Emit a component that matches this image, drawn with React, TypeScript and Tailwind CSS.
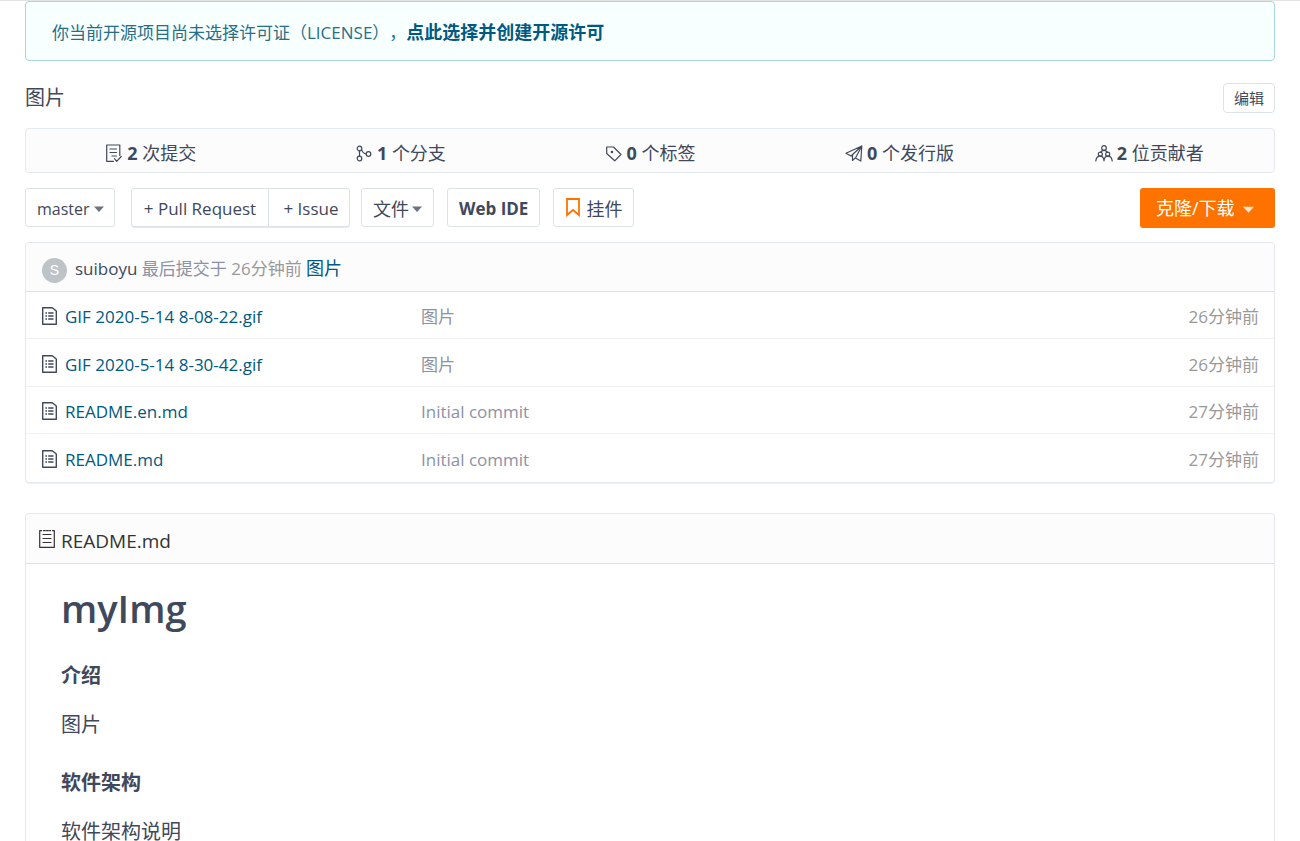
import React from 'react';

interface RepoFile {
  name: string;
  message: string;
  time: string;
}

interface Stat {
  icon: React.ReactNode;
  count: number;
  label: string;
}

interface IconProps {
  className?: string;
  children: React.ReactNode;
}

function Icon({ className = '', children }: IconProps) {
  return (
    <svg
      viewBox="0 0 18 18"
      className={`h-[18px] w-[18px] shrink-0 ${className}`}
      fill="none"
      stroke="currentColor"
      strokeWidth="1.2"
      strokeLinecap="round"
      strokeLinejoin="round"
      aria-hidden="true"
    >
      {children}
    </svg>
  );
}

function Caret({ className = 'h-[6px] w-[10px] text-[#6b7280]' }: { className?: string }) {
  return (
    <svg viewBox="0 0 10 6" className={`shrink-0 ${className}`} fill="currentColor" aria-hidden="true">
      <path d="M0 .5h10L5 6z" />
    </svg>
  );
}

function FileIcon() {
  return (
    <Icon className="mb-0.5">
      <path d="M1.7.7h9.600l4 3.300v13.300H1.700z" strokeWidth="1.400" />
      <path d="M7.200 6h5.300M7.200 9h5.300M7.200 12h5.300" strokeWidth="1.400" strokeLinecap="butt" />
      <path d="M4.400 6h1.600M4.400 9h1.600M4.400 12h1.600" strokeWidth="1.600" strokeLinecap="butt" />
    </Icon>
  );
}

const stats: Stat[] = [
  {
    icon: (
      <Icon>
        <path d="M8.500 17.300H1.700V1H14.800V11.500" />
        <path d="M5 5h6.500M5 8.500h6.500M7 12h4.500" />
        <path d="M9.500 14.700l2.200 2.600 4.500-4.800" />
      </Icon>
    ),
    count: 2,
    label: '次提交',
  },
  {
    icon: (
      <Icon>
        <circle cx="4.500" cy="4.500" r="2.300" />
        <circle cx="4.500" cy="14.500" r="2.300" />
        <circle cx="13.500" cy="10" r="2.300" />
        <path d="M4.500 6.800v5.400M6.500 5.600c1 2.800 2.500 4 4.700 4.300" />
      </Icon>
    ),
    count: 1,
    label: '个分支',
  },
  {
    icon: (
      <Icon>
        <path d="M1.700 3h6.800l7.500 7.500-6.300 6.300-8-7.300z" />
        <circle cx="7" cy="8" r="0.700" fill="currentColor" />
      </Icon>
    ),
    count: 0,
    label: '个标签',
  },
  {
    icon: (
      <Icon>
        <path d="M16.800 2L1 9.300l5 2.700zM16.800 2L15.800 17 10.500 14zM7.500 11v5.500l2.800-2.600" />
      </Icon>
    ),
    count: 0,
    label: '个发行版',
  },
  {
    icon: (
      <Icon>
        <circle cx="9" cy="4" r="2.300" />
        <path d="M5.500 8.300C6.500 6.900 7.600 6.400 9 6.400s2.500.5 3.500 1.900" />
        <circle cx="5.300" cy="10.200" r="2" />
        <circle cx="12.700" cy="10.200" r="2" />
        <path d="M.8 17c.3-3.200 2-4.800 4.500-4.800 2 0 3.400 1.600 3.700 4.600.3-3 1.700-4.600 3.700-4.600 2.500 0 4.200 1.600 4.500 4.800" />
      </Icon>
    ),
    count: 2,
    label: '位贡献者',
  },
];

const files: RepoFile[] = [
  { name: 'GIF 2020-5-14 8-08-22.gif', message: '图片', time: '26分钟前' },
  { name: 'GIF 2020-5-14 8-30-42.gif', message: '图片', time: '26分钟前' },
  { name: 'README.en.md', message: 'Initial commit', time: '27分钟前' },
  { name: 'README.md', message: 'Initial commit', time: '27分钟前' },
];

function LicenseNotice() {
  return (
    <div className="flex h-[60px] items-center rounded border border-[#a9d5de] bg-[#f8ffff] px-[26px] pt-0.5 text-[#276f86] [text-spacing-trim:space-all]">
      <p>
        你当前开源项目尚未选择许可证（LICENSE），
        <a href="#license" className="text-lg leading-6 font-bold text-[#005980]">
          点此选择并创建开源许可
        </a>
      </p>
    </div>
  );
}

function Toolbar() {
  const button = 'flex h-[39px] items-center rounded-[3px] border border-[#dce3e8] bg-white px-[11px] pt-0.5';

  return (
    <div className="mt-[15px] flex items-start justify-between">
      <div className="flex items-center">
        <div className="relative mr-4">
          <select
            aria-label="分支"
            className="h-[39px] w-[90px] appearance-none rounded-[3px] border border-[#dce3e8] bg-white pt-0.5 pl-[11px] text-base"
          >
            <option>master</option>
          </select>
          <Caret className="pointer-events-none absolute top-[18px] right-[11px] h-[6px] w-[10px] text-[#6b7280]" />
        </div>

        <div className="mr-[11px] flex h-[39px] rounded-[3px] border border-[#dce3e8] bg-white shadow-[0_1px_0_#e6ebef]">
          <button type="button" className="w-[137px] border-r border-[#dce3e8] pt-0.5">
            + Pull Request
          </button>
          <button type="button" className="w-20 pt-0.5 pl-1">
            + Issue
          </button>
        </div>

        <div className="flex gap-[13px]">
          <button type="button" className={`${button} gap-[3px] text-lg`}>
            文件
            <Caret />
          </button>
          <button type="button" className={`${button} font-bold`}>
            Web IDE
          </button>
          <button type="button" className={`${button} gap-[5px] text-lg`}>
            <svg viewBox="0 0 16 20" className="mb-1 h-5 w-4 text-[#fe7300]" fill="none" stroke="currentColor" strokeWidth="1.800" aria-hidden="true">
              <path d="M2 2h12v16l-6-5-6 5z" />
            </svg>
            挂件
          </button>
        </div>
      </div>

      <button type="button" className="flex h-10 w-[135px] items-center gap-2 rounded-[3px] bg-[#fe7300] pl-4 text-lg text-white">
        克隆/下载
        <Caret className="mt-0.5 h-[7px] w-[11px] text-[#ffe3cc]" />
      </button>
    </div>
  );
}

function FileList() {
  return (
    <div className="mt-[14px] rounded border border-[#e3e9ed] shadow-[0_1px_0_#eef1f4]">
      <div className="flex h-12 items-center rounded-t bg-[#fcfcfc] px-4 pt-1">
        <span className="mt-0.5 mr-2 flex h-[25px] w-[25px] items-center justify-center rounded-full bg-[#bdc3c7] font-[Liberation_Sans] text-sm text-white">
          S
        </span>
        <p className="pb-0.5 text-[#8c92a4]">
          <a href="#suiboyu" className="text-[#40485b]">suiboyu</a> 最后提交于{' '}
          <span className="text-[#999999]">26分钟前</span>{' '}
          <a href="#commit" className="text-lg leading-6 text-[#005980]">图片</a>
        </p>
      </div>
      <table className="w-full table-fixed border-collapse">
        <tbody>
          {files.map((file) => (
            <tr key={file.name} className="border-t border-[#eff2f5] first:border-[#dce3e8] odd:h-[47px] even:h-12">
              <td className="w-[395px] pt-1 pl-[15px]">
                <div className="flex items-center gap-1.5">
                  <FileIcon />
                  <a href="#file" className="text-[#005980]">{file.name}</a>
                </div>
              </td>
              <td className="pt-1 text-[#8c92a4]">{file.message}</td>
              <td className="pt-1 pr-[15px] text-right text-[#999999]">{file.time}</td>
            </tr>
          ))}
        </tbody>
      </table>
    </div>
  );
}

function Readme() {
  return (
    <div className="mt-[30px] rounded-t border border-b-0 border-[#e3e9ed]">
      <div className="flex h-[50px] items-center gap-[5px] rounded-t border-b border-[#dce3e8] bg-[#fcfcfc] px-3 pt-1.5 text-[19px] text-[#333333]">
        <Icon className="mb-1">
          <path d="M3.500.7H1.700v16.600h14.600V.7h-1.800M5.500.7h1.500M8.300.7h1.500M11 .7h1.500" />
          <path d="M5 4.500h8M5 8.500h8M5 12.500h8" />
        </Icon>
        <h3>README.md</h3>
      </div>
      <article className="px-[35px] pt-[18px] pb-10 text-xl leading-[30px]">
        <h1 className="text-[38px] leading-[52px] font-semibold">myImg</h1>
        <h4 className="mt-[27px] font-bold">介绍</h4>
        <p className="mt-[19px]">图片</p>
        <h4 className="mt-7 font-bold">软件架构</h4>
        <p className="mt-[19px]">软件架构说明</p>
      </article>
    </div>
  );
}

export default function App() {
  return (
    <div className="border-t border-[#e4e4e4] bg-white px-[25px] font-['Open_Sans','Noto_Sans_CJK_SC',sans-serif] text-[17px] leading-6 text-[#40485b]">
      <LicenseNotice />

      {/* Description */}
      <div className="mt-[22px] flex items-center justify-between">
        <h2 className="text-xl">图片</h2>
        <button type="button" className="h-[30px] w-[52px] rounded-sm border border-[#dce3e8] text-[15px]">
          编辑
        </button>
      </div>

      {/* Stats */}
      <ul className="mt-[15px] grid h-[45px] grid-cols-5 rounded border border-[#e3e9ed] bg-[#fcfcfc]">
        {stats.map((stat) => (
          <li key={stat.label} className="flex items-center justify-center gap-1 pt-1 text-lg">
            {stat.icon}
            <span>
              <b>{stat.count}</b> {stat.label}
            </span>
          </li>
        ))}
      </ul>

      <Toolbar />
      <FileList />
      <Readme />
    </div>
  );
}
